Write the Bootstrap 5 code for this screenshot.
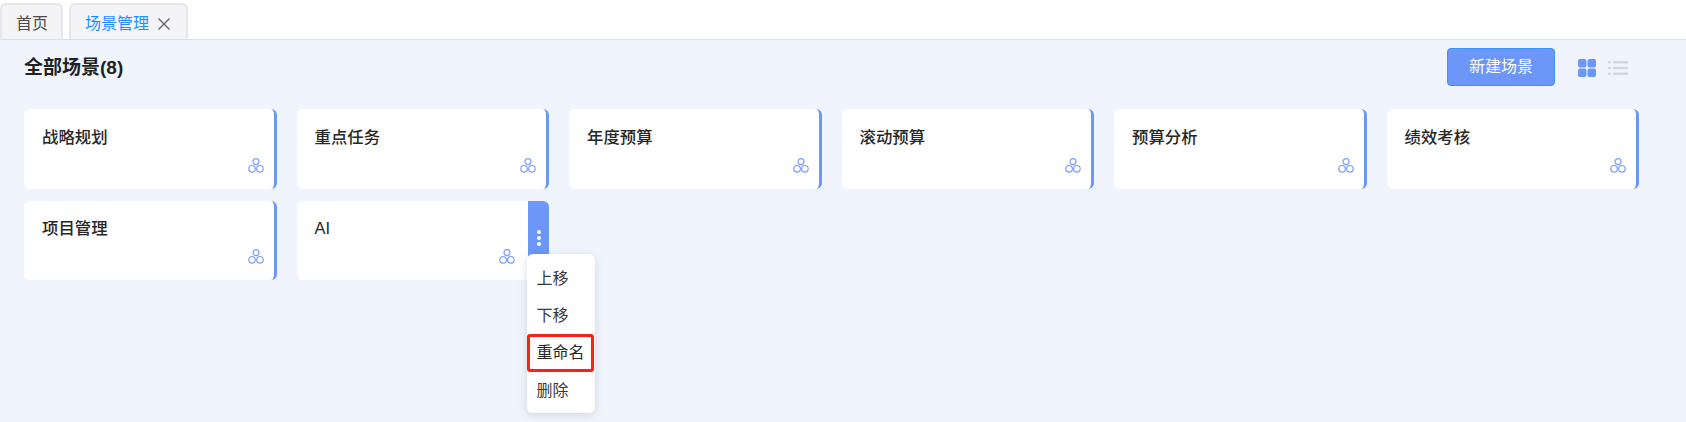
<!DOCTYPE html>
<html lang="zh-CN">
<head>
  <meta charset="UTF-8" />
  <title>场景管理</title>
  <link href="https://cdn.jsdelivr.net/npm/bootstrap@5.3.0/dist/css/bootstrap.min.css" rel="stylesheet">
  <style>
    html, body { height: 100%; }
    body {
      background: #fff;
      overflow: hidden;
      font-family: "Liberation Sans", "Noto Sans CJK SC", sans-serif;
      color: #262626;
    }
    .tab-strip { height: 39px; padding-top: 3px; gap: 6px; }
    .tab-item {
      height: 36px;
      padding: 4px 13px 0 14px;
      background: #f4f4f6;
      border: 2px solid #e4e7ed;
      border-bottom: 0;
      border-radius: 6px 6px 0 0;
      font-size: 16px;
      color: #4a4a4a;
    }
    .tab-active { color: #1890ff; gap: 8px; padding-right: 15px; }
    .tab-close { display: block; }
    .scene-page {
      height: 383px;
      background: #f0f5fd;
      border-top: 1px solid #dcdfe6;
      padding: 8px 24px 0;
    }
    .page-head { height: 38px; margin-bottom: 23px; }
    .page-title { font-size: 19px; font-weight: 700; color: #222; margin: 0; padding-top: 2px; }
    .btn-new {
      width: 108px;
      height: 38px;
      padding: 0;
      margin-right: 23px;
      font-size: 16px;
      color: #fff;
      background: #6c96f7;
      border: 1px solid #3a93f5;
      border-radius: 4px;
    }
    .view-switch { gap: 12px; margin-right: 34px; margin-top: 2px; }
    .scene-grid {
      display: grid;
      grid-template-columns: repeat(6, 252.5px);
      grid-template-rows: 80px 79px;
      column-gap: 20px;
      row-gap: 12px;
    }
    .scene-item {
      position: relative;
      background: #fff;
      border-right: 3px solid #6c96f7;
      border-radius: 6px;
      padding: 16px 18px;
      font-size: 16.4px;
      line-height: 24px;
      font-weight: 500;
      color: #262626;
    }
    .scene-item:nth-child(n+7) { padding-top: 15px; }
    .scene-icon { position: absolute; right: 10px; bottom: 16px; }
    .scene-hover { border-right: 0; }
    .scene-hover .scene-icon { right: 34px; }
    .scene-more {
      position: absolute;
      top: 0;
      right: 0;
      bottom: 0;
      width: 21px;
      background: #6c96f7;
      border-radius: 0 6px 6px 0;
      gap: 2px;
      padding-top: 29px;
    }
    .more-dot { width: 4px; height: 4px; border-radius: 50%; background: #fff; }
    .scene-menu {
      position: absolute;
      top: 53px;
      left: 230px;
      width: 68px;
      height: 159px;
      padding: 6px 0 0;
      background: #fff;
      border-radius: 6px;
      box-shadow: 0 2px 10px rgba(60, 70, 100, .18);
      font-weight: 400;
      z-index: 5;
    }
    .scene-menu-row {
      height: 37px;
      padding-left: 10px;
      font-size: 16px;
      color: #3a3a3a;
    }
    .row-marked {
      height: 38px;
      margin-right: 1px;
      padding-left: 7px;
      border: 3px solid #fb2117;
      border-radius: 3px;
      color: #262626;
    }
  </style>
</head>
<body>
  <!-- tabs -->
  <div class="tab-strip d-flex">
    <div class="tab-item d-flex align-items-center">首页</div>
    <div class="tab-item tab-active d-flex align-items-center">
      <span>场景管理</span>
      <svg class="tab-close" width="14" height="14" viewBox="0 0 14 14"><path d="M1.5 1.5L12.5 12.5M12.5 1.5L1.5 12.5" stroke="#666" stroke-width="1.4" fill="none"/></svg>
    </div>
  </div>

  <div class="scene-page">
    <div class="page-head d-flex align-items-center justify-content-between">
      <h1 class="page-title">全部场景(8)</h1>
      <div class="d-flex align-items-center">
        <button type="button" class="btn btn-new">新建场景</button>
        <div class="view-switch d-flex align-items-center">
          <svg width="18" height="18" viewBox="0 0 18 18" fill="#6c96f7">
            <rect x="0" y="0" width="8.5" height="8.5" rx="2"/><rect x="9.5" y="0" width="8.5" height="8.5" rx="2"/>
            <rect x="0" y="9.5" width="8.5" height="8.5" rx="2"/><rect x="9.5" y="9.5" width="8.5" height="8.5" rx="2"/>
          </svg>
          <svg width="20" height="16" viewBox="0 0 20 16" fill="#cfd6e6">
            <rect x="0" y="1" width="3" height="2.4" rx="1"/><rect x="5" y="1" width="15" height="2.4" rx="1"/>
            <rect x="0" y="6.8" width="3" height="2.4" rx="1"/><rect x="5" y="6.8" width="15" height="2.4" rx="1"/>
            <rect x="0" y="12.6" width="3" height="2.4" rx="1"/><rect x="5" y="12.6" width="15" height="2.4" rx="1"/>
          </svg>
        </div>
      </div>
    </div>

    <div class="scene-grid" id="sceneGrid"></div>
  </div>

  <script src="https://cdn.jsdelivr.net/npm/bootstrap@5.3.0/dist/js/bootstrap.bundle.min.js"></script>
  <script>
    const scenes = ['战略规划', '重点任务', '年度预算', '滚动预算', '预算分析', '绩效考核', '项目管理', 'AI'];
    const icon = `<svg class="scene-icon" width="16" height="15" viewBox="0 0 16 15" fill="none" stroke="#7f9ff8" stroke-width="1.2">
      <circle cx="8" cy="3.6" r="3"/><circle cx="4.1" cy="10.8" r="3.3"/><circle cx="11.9" cy="10.8" r="3.3"/></svg>`;

    document.getElementById('sceneGrid').innerHTML = scenes.map(name => {
      if (name !== 'AI') return `<div class="scene-item">${name}${icon}</div>`;
      return `<div class="scene-item scene-hover">${name}${icon}
        <div class="scene-more d-flex flex-column align-items-center">
          <span class="more-dot"></span><span class="more-dot"></span><span class="more-dot"></span>
        </div>
        <div class="scene-menu">
          <div class="scene-menu-row d-flex align-items-center">上移</div>
          <div class="scene-menu-row d-flex align-items-center">下移</div>
          <div class="scene-menu-row row-marked d-flex align-items-center">重命名</div>
          <div class="scene-menu-row d-flex align-items-center">删除</div>
        </div>
      </div>`;
    }).join('');
  </script>
</body>
</html>
